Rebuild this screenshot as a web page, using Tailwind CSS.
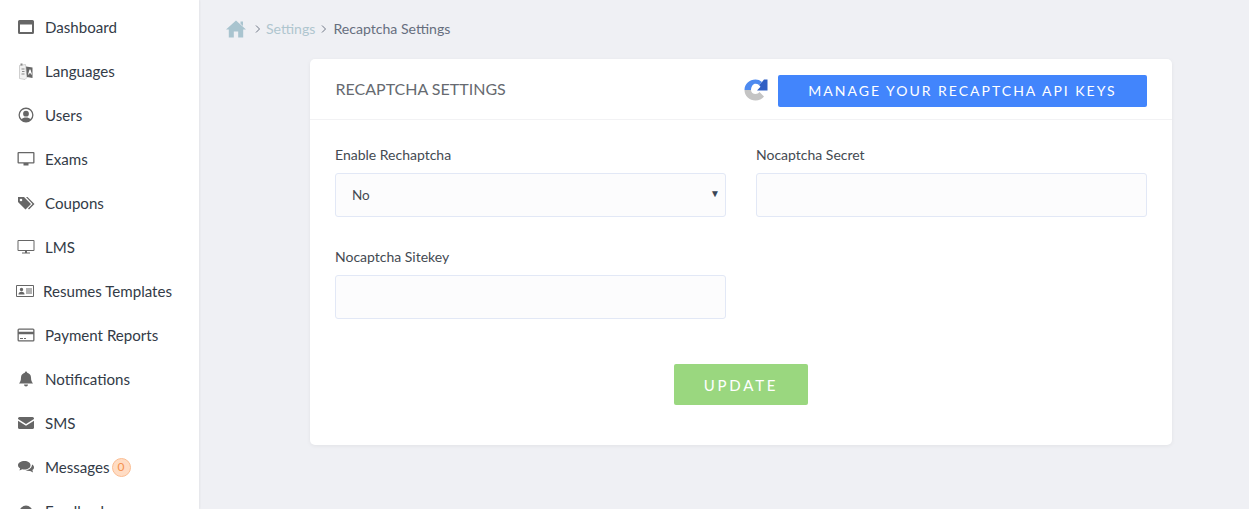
<!DOCTYPE html>
<html lang="en">
<head>
    <meta charset="UTF-8">
    <title>Recaptcha Settings</title>
    <script src="https://cdn.jsdelivr.net/npm/@tailwindcss/browser@4"></script>
</head>
<body class="h-[509px] overflow-hidden bg-[#eff0f4] font-['Lato',sans-serif]">
<div class="flex h-[509px]">
    <!-- Sidebar -->
    <aside class="w-[199px] h-[509px] shrink-0 overflow-hidden bg-white shadow-[1px_0_2px_rgba(0,0,0,0.05)] pt-[5px] text-[15.1px] text-[#333b47]">
        <a class="flex items-center h-[44px] pl-[17px]">
            <svg class="w-[18px] h-[18px] mr-[10px]" viewBox="0 0 18 18"><path fill="#666" fill-rule="evenodd" d="M2.500 2h13a1.500 1.500 0 0 1 1.500 1.500v11a1.500 1.500 0 0 1-1.500 1.500h-13A1.500 1.500 0 0 1 1 14.500v-11A1.500 1.500 0 0 1 2.500 2zM3 6.500V14h12V6.500z"/></svg>
            <span>Dashboard</span>
        </a>
        <a class="flex items-center h-[44px] pl-[17px]">
            <svg class="w-[18px] h-[18px] mr-[10px]" viewBox="0 0 18 18"><path fill="#f1f1f1" stroke="#bdbdbd" stroke-width=".7" d="M2.500 3.500l6-1 1.500 13 -2 2-5.500-1z"/><path fill="#666" d="M9 4.500l6.500 1V16L10 15z"/><path fill="#fff" d="M11 12.500l1.500-5h1l1.500 5h-1l-.4-1.300h-1.200l-.4 1.300z"/><path fill="#8a8a8a" d="M4.500 6.500h3v1h-3zM5 9h2.500v1H5zM4.500 11.500h3v1h-3zM3.500 1.500h2v2h-2z"/></svg>
            <span>Languages</span>
        </a>
        <a class="flex items-center h-[44px] pl-[17px]">
            <svg class="w-[18px] h-[18px] mr-[10px]" viewBox="0 0 18 18"><path fill="#666" fill-rule="evenodd" d="M9 1.500a7.500 7.500 0 1 1 0 15 7.500 7.500 0 0 1 0-15zm0 1.400a6.100 6.100 0 0 0-4.500 10.200C5.500 12 7 11.500 9 11.500s3.500.5 4.500 1.600A6.100 6.100 0 0 0 9 2.900zM9 4.800a2.900 2.900 0 1 1 0 5.800 2.900 2.900 0 0 1 0-5.800z"/></svg>
            <span>Users</span>
        </a>
        <a class="flex items-center h-[44px] pl-[17px]">
            <svg class="w-[18px] h-[18px] mr-[10px]" viewBox="0 0 18 18"><path fill="#666" fill-rule="evenodd" d="M1.500 2h15a1 1 0 0 1 1 1v9.500a1 1 0 0 1-1 1h-15a1 1 0 0 1-1-1V3a1 1 0 0 1 1-1zm.3 1.300v8.900h14.400V3.300zM6.500 13.500h5V15.500h-5z"/></svg>
            <span>Exams</span>
        </a>
        <a class="flex items-center h-[44px] pl-[17px]">
            <svg class="w-[18px] h-[18px] mr-[10px]" viewBox="0 0 18 18"><path fill="#666" fill-rule="evenodd" d="M1 3h6l7 7-5.500 5.500L1 8zM4 4.700a1.300 1.300 0 1 0 0 2.600 1.300 1.300 0 0 0 0-2.600z"/><path fill="#666" d="M9 3h1.500l7 7-5.500 5.500-1-1 4.500-4.500z"/></svg>
            <span>Coupons</span>
        </a>
        <a class="flex items-center h-[44px] pl-[17px]">
            <svg class="w-[18px] h-[18px] mr-[10px]" viewBox="0 0 18 18"><path fill="#666" fill-rule="evenodd" d="M1.500 2h15a1 1 0 0 1 1 1v9a1 1 0 0 1-1 1h-15a1 1 0 0 1-1-1V3a1 1 0 0 1 1-1zm0 1v9h15V3zM8 13h2v1.500h3v1H5v-1h3z"/></svg>
            <span>LMS</span>
        </a>
        <a class="flex items-center h-[44px] pl-[16px]">
            <svg class="w-[18px] h-[18px] mr-[9px]" viewBox="0 0 18 18"><path fill="#666" fill-rule="evenodd" d="M1 3h16a1 1 0 0 1 1 1v10a1 1 0 0 1-1 1H1a1 1 0 0 1-1-1V4a1 1 0 0 1 1-1zm0 1v10h16V4zM5.500 5.800a1.700 1.700 0 1 1 0 3.400 1.700 1.700 0 0 1 0-3.400zM2.500 12.500c0-2 1-2.800 3-2.800s3 .8 3 2.800zM10 6.500h6v1h-6zM10 8.500h6v1h-6zM10 10.500h6v1h-6z"/></svg>
            <span>Resumes Templates</span>
        </a>
        <a class="flex items-center h-[44px] pl-[17px]">
            <svg class="w-[18px] h-[18px] mr-[10px]" viewBox="0 0 18 18"><path fill="#666" fill-rule="evenodd" d="M2 2.500h14A1.500 1.500 0 0 1 17.500 4v10a1.500 1.500 0 0 1-1.500 1.500H2A1.500 1.500 0 0 1 .5 14V4A1.500 1.500 0 0 1 2 2.500zM1.800 3.800v1.900h14.400V3.800zM1.800 8.300v5.900h14.400V8.300zM3 12h3v1H3zM7 12h2v1H7z"/></svg>
            <span>Payment Reports</span>
        </a>
        <a class="flex items-center h-[44px] pl-[17px]">
            <svg class="w-[18px] h-[18px] mr-[10px]" viewBox="0 0 18 18"><path fill="#666" d="M9 1.500a1.200 1.200 0 0 1 1.200 1.200C12.500 3.300 14 5 14 7.500c0 3.500 1 4.800 2 6H2c1-1.200 2-2.500 2-6 0-2.500 1.500-4.200 3.800-4.800A1.200 1.200 0 0 1 9 1.500zM7 14.500h4a2 2 0 0 1-4 0z"/></svg>
            <span>Notifications</span>
        </a>
        <a class="flex items-center h-[44px] pl-[17px]">
            <svg class="w-[18px] h-[18px] mr-[10px]" viewBox="0 0 18 18"><path fill="#666" d="M2.500 3h13A1.500 1.500 0 0 1 17 4.500v.4L9 10 1 4.900v-.4A1.500 1.500 0 0 1 2.500 3zM1 6.700l8 5.100 8-5.100v7.100a1.500 1.500 0 0 1-1.500 1.200h-13A1.500 1.500 0 0 1 1 13.800z"/></svg>
            <span>SMS</span>
        </a>
        <a class="flex items-center h-[44px] pl-[17px]">
            <svg class="w-[18px] h-[18px] mr-[10px]" viewBox="0 0 18 18"><path fill="#666" d="M7.500 3c3.500 0 6 1.800 6 4.200s-2.500 4.300-6 4.300c-.8 0-1.500-.1-2.200-.3L2.500 12.500l.6-2.300C1.800 9.500 1 8.400 1 7.200 1 4.800 4 3 7.500 3z"/><path fill="#666" d="M15 6.500c1.300.7 2 1.800 2 3 0 1-.6 2-1.600 2.600l.6 2.400-2.800-1.500c-1.800.2-3.400-.2-4.700-1 3.500 0 6.500-2 6.500-5.500z"/></svg>
            <span>Messages</span>
            <span class="ml-[2px] flex items-center justify-center w-[19px] h-[19px] rounded-full bg-[#ffdcc4] border border-[#fbbd92] text-[12px] text-[#f5914e]">0</span>
        </a>
        <a class="flex items-center h-[44px] pl-[17px]">
            <svg class="w-[18px] h-[18px] mr-[10px]" viewBox="0 0 18 18"><circle cx="9" cy="10" r="6.500" fill="#666"/></svg>
            <span>Feedback</span>
        </a>
    </aside>

    <!-- Main -->
    <main class="flex-1 min-w-0">
        <nav class="flex items-center h-[57px] pl-[27px] text-[14.100px]">
            <svg class="w-[20px] h-[18px]" viewBox="0 0 20 18"><path fill="#a9c4cf" d="M10 0.500L20 9.500h-2.800V17.500h-5v-6H7.800v6h-5V9.500H0zM14.500 1.500h2.500v4.500l-2.500-2.300z"/></svg>
            <svg class="w-[6px] h-[8px] ml-[9px]" viewBox="0 0 6 8"><path fill="none" stroke="#6f7785" d="M1 .5L4.500 4 1 7.500"/></svg>
            <span class="ml-[5px] text-[#afc6cf]">Settings</span>
            <svg class="w-[6px] h-[8px] ml-[6px]" viewBox="0 0 6 8"><path fill="none" stroke="#6f7785" d="M1 .5L4.500 4 1 7.500"/></svg>
            <span class="ml-[6px] text-[#666e7e]">Recaptcha Settings</span>
        </nav>

        <section class="w-[862px] h-[386px] mt-[2px] ml-[111px] rounded-[5px] bg-white shadow-[0_1px_4px_rgba(0,0,0,0.06)]">
            <header class="flex items-center h-[61px] pl-[25.500px] pr-[25px] border-b border-[#f2f2f4]">
                <h1 class="text-[16px] text-[#666a70]">RECAPTCHA SETTINGS</h1>
                <svg class="w-[24px] h-[24px] ml-auto mt-[2px]" viewBox="0 0 24 24">
                    <path fill="#c4c4c4" d="M0.500 12H7c.2 2.500 2 4 4.500 4 1.800 0 3-.7 4-2l4.500 4.500c-2 2.500-5 4-8.500 4C5.500 22.500.5 18 .5 12z"/>
                    <path fill="#4d8af0" d="M.5 12C.5 6 5.500 1.500 11.500 1.500c2.500 0 4.500.8 6.500 2.500L15 7c-1-.8-2.200-1.200-3.500-1.200C9 5.800 7.200 8.500 7 12z"/>
                    <path fill="#2f5fc4" d="M15 7l3-3 2-2.500 3.500 0v11H13l3.500-3.800C16.200 8.500 15.700 7.700 15 7z"/>
                </svg>
                <a class="flex items-center justify-center w-[369px] h-[32px] mt-[3px] ml-[10px] rounded-[2px] bg-[#4285fc] text-[14px] tracking-[2px] text-white">MANAGE YOUR RECAPTCHA API KEYS</a>
            </header>

            <form class="pl-[25px] pr-[26px] pt-[26px]">
                <div class="grid grid-cols-[391px_391px] gap-x-[30px]">
                    <div class="h-[102px]">
                        <label class="block h-[27px] text-[14px] leading-[18px] text-[#444a52]">Enable Rechaptcha</label>
                        <div class="relative flex items-center w-full h-[44px] pl-[16px] rounded-[3px] border border-[#e2e8f6] bg-[#fcfcfd] text-[13.500px] text-[#444a52]">
                            No
                            <span class="absolute right-[5px] top-[12px] text-[10px] text-[#3a4556]">▼</span>
                        </div>
                    </div>
                    <div class="h-[102px]">
                        <label class="block h-[27px] text-[14px] leading-[18px] text-[#444a52]">Nocaptcha Secret</label>
                        <input type="text" class="block w-full h-[44px] rounded-[3px] border border-[#e2e8f6] bg-[#fcfcfd]">
                    </div>
                    <div>
                        <label class="block h-[27px] text-[14px] leading-[18px] text-[#444a52]">Nocaptcha Sitekey</label>
                        <input type="text" class="block w-full h-[44px] rounded-[3px] border border-[#e2e8f6] bg-[#fcfcfd]">
                    </div>
                </div>
                <div class="flex justify-center mt-[45px] pl-[1px]">
                    <button type="button" class="w-[134px] h-[41px] pt-[2px] rounded-[2px] bg-[#9ad77f] text-[15px] tracking-[2.800px] text-white">UPDATE</button>
                </div>
            </form>
        </section>
    </main>
</div>
</body>
</html>
